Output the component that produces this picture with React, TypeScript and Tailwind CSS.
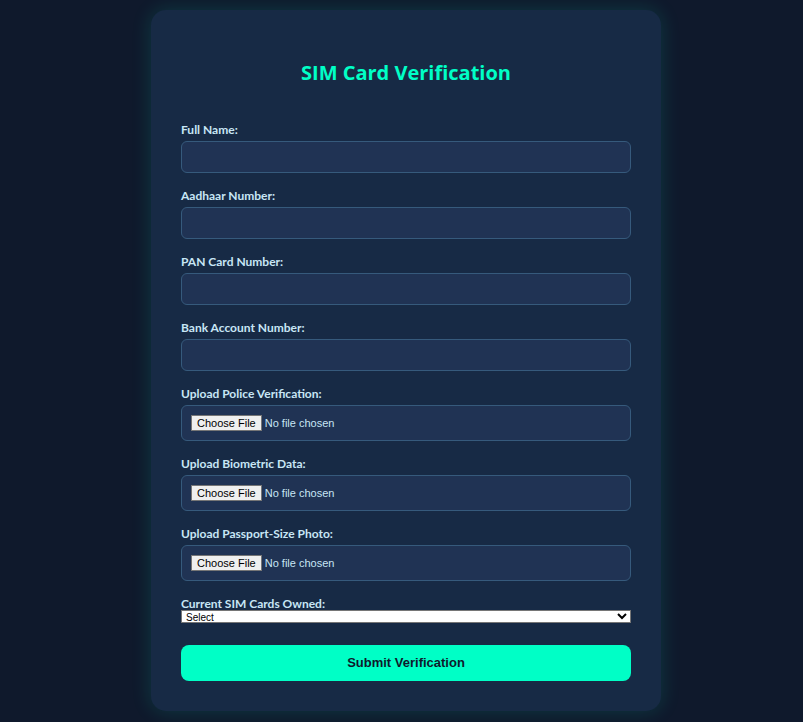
import type { ReactNode } from "react";

const textFields = [
  { id: "full-name", label: "Full Name:" },
  { id: "aadhaar", label: "Aadhaar Number:" },
  { id: "pan", label: "PAN Card Number:" },
  { id: "bank", label: "Bank Account Number:" },
];

const fileFields = [
  { id: "police", label: "Upload Police Verification:" },
  { id: "biometric", label: "Upload Biometric Data:" },
  { id: "photo", label: "Upload Passport-Size Photo:" },
];

function Label({ htmlFor, children }: { htmlFor: string; children: ReactNode }) {
  return (
    <label
      htmlFor={htmlFor}
      className="block font-['Lato','Open_Sans',sans-serif] text-[12px] leading-[13px] font-bold text-[#c8e6f5]"
    >
      {children}
    </label>
  );
}

export default function App() {
  return (
    <main className="min-h-screen bg-[#0f192c] py-2.5 pr-4 pl-[25px] font-['Open_Sans','Noto_Sans',sans-serif]">
      <form
        onSubmit={(e) => e.preventDefault()}
        className="mx-auto w-full max-w-[510px] rounded-[15px] bg-[#172a45] p-[30px] shadow-[0_0_20px_rgba(0,255,200,0.15)]"
      >
        <h1 className="mt-[17px] mb-[34px] text-center text-[20px] leading-8 font-bold text-[#00ffc6]">
          SIM Card Verification
        </h1>
        <div className="flex flex-col gap-4">
          {textFields.map((f) => (
            <div key={f.id} className="flex flex-col gap-[5px]">
              <Label htmlFor={f.id}>{f.label}</Label>
              <input
                id={f.id}
                type="text"
                className="h-8 w-full rounded-[6px] border border-[#365a7c] bg-[#203354] px-2.5 text-[12px] text-[#c8e6f5] outline-none focus:border-[#00ffc6]"
              />
            </div>
          ))}
          {fileFields.map((f) => (
            <div key={f.id} className="flex flex-col gap-[5px]">
              <Label htmlFor={f.id}>{f.label}</Label>
              <input
                id={f.id}
                type="file"
                className="h-9 w-full rounded-[6px] border border-[#365a7c] bg-[#203354] px-[9px] py-[9px] font-['Liberation_Sans',sans-serif] text-[11px] leading-[14px] text-[#c8e6f5] file:mr-[3px] file:h-4 file:border file:border-solid file:border-[#767676] file:bg-[#efefef] file:px-[5px] file:text-[11px] file:leading-[14px] file:text-black"
              />
            </div>
          ))}
          <div>
            <Label htmlFor="sims">Current SIM Cards Owned:</Label>
            <select
              id="sims"
              defaultValue=""
              className="block h-[13px] w-full border border-[#767676] bg-white font-['Liberation_Sans',sans-serif] text-[10px] leading-[11px] text-black"
            >
              <option value="">Select</option>
              <option>1</option>
              <option>2</option>
              <option>3</option>
            </select>
          </div>
        </div>
        <button
          type="submit"
          className="mt-[22px] block h-9 w-full rounded-[8px] bg-[#00ffc6] font-['Liberation_Sans',sans-serif] text-[13px] font-bold text-[#0f192c]"
        >
          Submit Verification
        </button>
      </form>
    </main>
  );
}
